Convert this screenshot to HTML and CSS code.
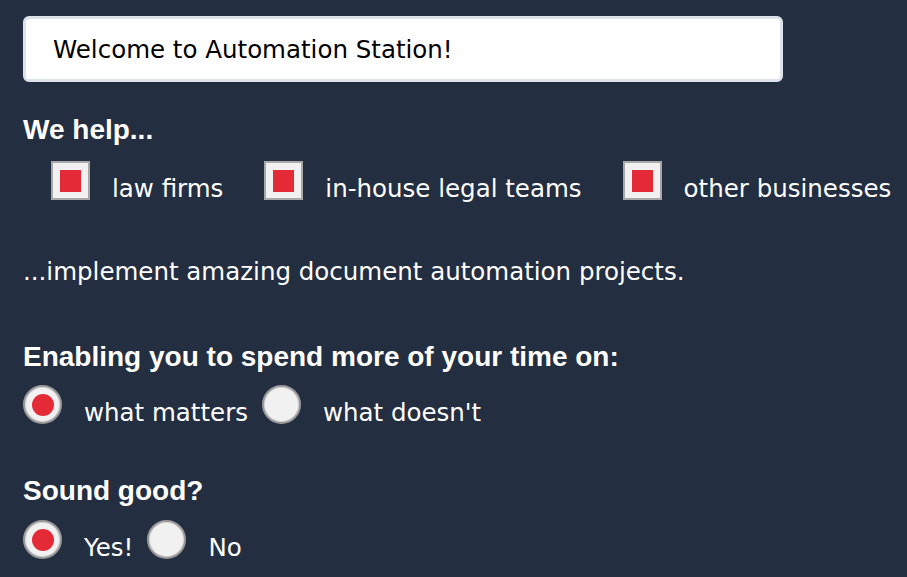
FILE: index.html
```html
<!DOCTYPE html>
<html lang="en">
<head>
<meta charset="utf-8">
<title>Automation Station</title>
<link rel="stylesheet" href="styles.css">
</head>
<body>
<main class="page">
  <input class="welcome" type="text" value="Welcome to Automation Station!">

  <section class="group group-help">
    <h2 class="heading">We help...</h2>
    <div class="options checks">
      <label class="opt check-opt"><input type="checkbox" class="box" checked><span class="opt-text">law firms</span></label>
      <label class="opt check-opt"><input type="checkbox" class="box" checked><span class="opt-text">in-house legal teams</span></label>
      <label class="opt check-opt"><input type="checkbox" class="box" checked><span class="opt-text">other businesses</span></label>
    </div>
  </section>

  <p class="statement">...implement amazing document automation projects.</p>

  <section class="group group-time">
    <h2 class="heading">Enabling you to spend more of your time on:</h2>
    <div class="options radios">
      <label class="opt radio-opt"><input type="radio" name="time" class="dot" checked><span class="opt-text">what matters</span></label>
      <label class="opt radio-opt"><input type="radio" name="time" class="dot"><span class="opt-text">what doesn't</span></label>
    </div>
  </section>

  <section class="group group-sound">
    <h2 class="heading">Sound good?</h2>
    <div class="options radios">
      <label class="opt radio-opt"><input type="radio" name="good" class="dot" checked><span class="opt-text">Yes!</span></label>
      <label class="opt radio-opt"><input type="radio" name="good" class="dot"><span class="opt-text">No</span></label>
    </div>
  </section>
</main>
</body>
</html>
```

FILE: styles.css
```css
html, body {
  margin: 0;
  padding: 0;
}

body {
  background: #242e41;
  color: #ffffff;
  font-family: "DejaVu Sans", sans-serif;
  font-size: 24.5px;
  overflow: hidden;
}

.page {
  display: flex;
  flex-direction: column;
  align-items: flex-start;
  padding: 16px 0 0 23px;
}

.welcome {
  box-sizing: border-box;
  width: 760px;
  height: 66px;
  margin: 0;
  padding: 0 0 0 27px;
  border: 3px solid #dce3ea;
  border-radius: 6px;
  background: #ffffff;
  color: #000000;
  font-family: "DejaVu Sans", sans-serif;
  font-size: 24.5px;
  outline: none;
}

.group {
  display: flex;
  flex-direction: column;
}

.heading {
  margin: 0;
  font-family: "Liberation Sans", Arial, sans-serif;
  font-weight: bold;
  font-size: 28px;
  line-height: 30px;
}

.group-help {
  margin-top: 33px;
}

.group-time {
  margin-top: 56px;
}

.group-sound {
  margin-top: 52px;
}

.options {
  display: flex;
  align-items: center;
}

.checks {
  margin-top: 16px;
  padding-left: 28px;
}

.radios {
  margin-top: 13px;
}

.group-sound .radios {
  margin-top: 14px;
}

.opt {
  display: flex;
  flex-shrink: 0;
  align-items: center;
  gap: 22px;
}

.check-opt {
  margin-right: 41px;
}

.check-opt:last-child,
.radio-opt:last-child {
  margin-right: 0;
}

.radio-opt {
  margin-right: 14px;
}

.opt-text {
  padding-top: 16px;
  line-height: 23px;
  white-space: nowrap;
}

.box {
  appearance: none;
  -webkit-appearance: none;
  box-sizing: border-box;
  width: 39px;
  height: 39px;
  margin: 0;
  border: 2px solid #a8a8a8;
  background: #f1f1f1;
  display: grid;
  place-content: center;
}

.box:checked::before {
  content: "";
  width: 21px;
  height: 22px;
  background: #e52a37;
}

.dot {
  appearance: none;
  -webkit-appearance: none;
  box-sizing: border-box;
  width: 39px;
  height: 39px;
  margin: 0;
  border: 2px solid #9a9a9a;
  border-radius: 50%;
  background: #f1f1f1;
  box-shadow: inset 0 0 0 1px #d6d6d6;
  display: grid;
  place-content: center;
}

.dot:checked::before {
  content: "";
  width: 22px;
  height: 22px;
  border-radius: 50%;
  background: #e52a37;
}

.statement {
  margin: 58px 0 0;
  line-height: 28px;
}
```
